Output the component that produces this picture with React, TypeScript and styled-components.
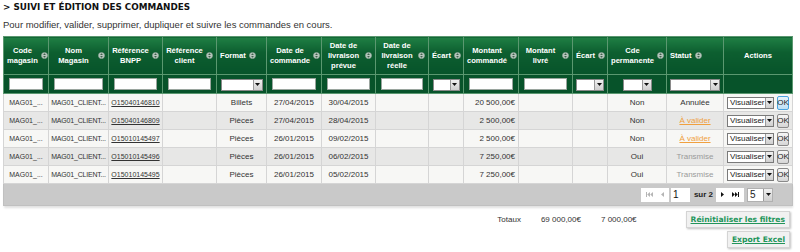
import React from "react";
import styled, { createGlobalStyle } from "styled-components";

const GlobalStyle = createGlobalStyle`
  html, body { margin: 0; padding: 0; background: #fff; }
  body { font-family: "Liberation Sans", Arial, sans-serif; }
`;

const Page = styled.div`
  width: 800px;
  height: 252px;
  padding: 2px 3px 0;
  box-sizing: border-box;
  overflow: hidden;
`;

const Title = styled.h1`
  margin: 0;
  font-family: "DejaVu Sans", Verdana, sans-serif;
  font-size: 8.8px;
  font-weight: bold;
  line-height: 10px;
  color: #111;
`;

const Intro = styled.p`
  margin: 7px 0 0;
  font-family: "Liberation Sans", Arial, sans-serif;
  font-size: 9.5px;
  line-height: 12px;
  color: #333;
`;

const Table = styled.table`
  margin-top: 5px;
  width: 789px;
  border-collapse: collapse;
  table-layout: fixed;
`;

const HeadCell = styled.th<{ $center?: boolean }>`
  height: 37px;
  padding: 0 3px;
  background: linear-gradient(#1f7f44 0%, #0d5f30 40%, #07532a 100%);
  border: 1px solid #5b9870;
  color: #fff;
  font-size: 7.6px;
  font-weight: bold;
  line-height: 10px;
  vertical-align: middle;
  text-align: ${(p) => (p.$center ? "center" : "left")};
`;

const HeadInner = styled.div`
  display: flex;
  align-items: center;
  gap: 3px;
`;

const HeadLabel = styled.span`
  flex: 0 1 auto;
  text-align: center;
`;

const FilterCell = styled.td`
  height: 14px;
  padding: 0;
  background: #07532a;
  border: 1px solid #5b9870;
  text-align: center;
  vertical-align: middle;
`;

const FilterInput = styled.div`
  width: calc(100% - 10px);
  height: 12px;
  margin: 0 auto;
  box-sizing: border-box;
  background: #fff;
  border: 1px solid #9aa59e;
`;

const FakeSelect = styled.div<{ $w: number }>`
  display: inline-flex;
  align-items: center;
  justify-content: space-between;
  width: ${(p) => p.$w}px;
  height: 12px;
  box-sizing: border-box;
  background: #fff;
  border: 1px solid #8a8a8a;
  vertical-align: middle;
  font-size: 8px;
  color: #222;
  padding-left: 2px;
`;

const ArrowBox = styled.span`
  display: flex;
  align-items: center;
  justify-content: center;
  width: 9px;
  height: 100%;
  box-sizing: border-box;
  background: linear-gradient(#f0f0f0, #cfcfcf);
  border-left: 1px solid #9a9a9a;
`;

const Row = styled.tr<{ $alt?: boolean }>`
  background: ${(p) => (p.$alt ? "#e7e7e6" : "#f7f7f5")};
`;

const Cell = styled.td<{ $align?: "left" | "center" | "right"; $small?: boolean; $tight?: boolean }>`
  height: 17px;
  padding: 0 ${(p) => (p.$small ? 1 : 3)}px;
  border: 1px solid #d5d5d5;
  font-size: ${(p) => (p.$small ? 7 : 8)}px;
  letter-spacing: ${(p) => (p.$tight ? "-0.2px" : "normal")};
  color: #333;
  white-space: nowrap;
  overflow: hidden;
  text-align: ${(p) => p.$align ?? "center"};
  vertical-align: middle;
`;

const RefLink = styled.a`
  color: #333;
  text-decoration: underline;
`;

const StatusText = styled.span<{ $kind: "cancel" | "validate" | "sent" }>`
  color: ${(p) => (p.$kind === "validate" ? "#f0a040" : p.$kind === "sent" ? "#9a9a9a" : "#333")};
  text-decoration: ${(p) => (p.$kind === "validate" ? "underline" : "none")};
`;

const Actions = styled.div`
  display: flex;
  align-items: center;
  gap: 3px;
`;

const ActionSelect = styled(FakeSelect)`
  height: 12px;
  border-color: #7a7a7a;
`;

const OkButton = styled.span<{ $focus?: boolean }>`
  display: inline-flex;
  align-items: center;
  justify-content: center;
  width: 12px;
  height: 14px;
  box-sizing: border-box;
  border: 1px solid ${(p) => (p.$focus ? "#4aa3df" : "#8a8a8a")};
  border-radius: 2px;
  background: ${(p) => (p.$focus ? "linear-gradient(#e8f4fc, #bfe0f5)" : "linear-gradient(#f6f6f6, #d6d6d6)")};
  font-size: 8px;
  color: #222;
`;

const FootCell = styled.td`
  height: 21px;
  padding: 0 19px 0 0;
  background: #c9c9c9;
  border: 1px solid #c0c0c0;
  box-shadow: 0 2px 2px rgba(0, 0, 0, 0.12);
`;

const Pager = styled.div`
  display: flex;
  justify-content: flex-end;
  align-items: center;
  gap: 2px;
`;

const NavBox = styled.span`
  display: inline-flex;
  align-items: center;
  gap: 8px;
  height: 14px;
  padding: 0 5px;
  background: #fff;
`;

const PageInput = styled.span`
  display: inline-flex;
  align-items: center;
  width: 19px;
  height: 14px;
  padding-left: 2px;
  box-sizing: border-box;
  background: #fff;
  font-size: 10px;
  color: #111;
`;

const PageOf = styled.span`
  font-size: 8px;
  font-weight: bold;
  color: #222;
  margin: 0 1px 0 2px;
`;

const SizeSelect = styled(FakeSelect)`
  height: 14px;
  font-size: 10px;
  margin-left: 1px;
  border-color: #b0b0b0;
`;

const Bottom = styled.div`
  display: flex;
  align-items: flex-start;
  margin-top: 5px;
  width: 787px;
`;

const Totals = styled.div`
  flex: 1;
  display: flex;
  justify-content: flex-end;
  align-items: center;
  gap: 20px;
  height: 17px;
  padding-right: 49px;
  font-size: 8px;
  color: #333;
`;

const Buttons = styled.div`
  display: flex;
  flex-direction: column;
  align-items: flex-end;
  gap: 3px;
`;

const GreenButton = styled.a`
  display: inline-flex;
  align-items: center;
  height: 17px;
  padding: 0 4px;
  box-sizing: border-box;
  background: #f1f1f1;
  border: 1px solid #d4d4d4;
  box-shadow: 1px 1px 2px rgba(0, 0, 0, 0.25);
  font-family: "DejaVu Sans", Verdana, sans-serif;
  font-size: 7.6px;
  font-weight: bold;
  color: #22955a;
  text-decoration: underline;
`;

const SortIcon = () => (
  <svg width="7" height="7" viewBox="0 0 7 7" style={{ flex: "none" }}>
    <circle cx="3.5" cy="3.5" r="3.1" fill="#b7c6bd" stroke="#8fa598" strokeWidth="0.5" />
    <path d="M3.5 1.3 L4.9 3 H2.1Z M3.5 5.7 L4.9 4 H2.1Z" fill="#3e604b" />
  </svg>
);

const DownArrow = () => (
  <svg width="5" height="3" viewBox="0 0 5 3">
    <path d="M0 0 H5 L2.5 3Z" fill="#111" />
  </svg>
);

const NavIcon = ({ kind, dim }: { kind: "first" | "prev" | "next" | "last"; dim?: boolean }) => {
  const c = dim ? "#b5b5b5" : "#111";
  const paths: Record<string, string> = {
    first: "M0 0 H1 V5 H0Z M4 0 V5 L1.2 2.5Z M7 0 V5 L4.2 2.5Z",
    prev: "M3 0 V5 L0 2.5Z",
    next: "M0 0 V5 L3 2.5Z",
    last: "M0 0 V5 L2.8 2.5Z M3 0 V5 L5.8 2.5Z M6 0 H7 V5 H6Z",
  };
  const w = kind === "prev" || kind === "next" ? 3 : 7;
  return (
    <svg width={w} height="5" viewBox={`0 0 ${w} 5`}>
      <path d={paths[kind]} fill={c} />
    </svg>
  );
};

const widths = [45, 60, 54, 54, 50, 55, 54, 53, 35, 55, 54, 35, 59, 57, 69];

type Col = { label: string; sort: boolean; filter: "input" | "select" | "none"; selW?: number };
const columns: Col[] = [
  { label: "Code magasin", sort: true, filter: "input" },
  { label: "Nom Magasin", sort: true, filter: "input" },
  { label: "Référence BNPP", sort: true, filter: "input" },
  { label: "Référence client", sort: true, filter: "input" },
  { label: "Format", sort: true, filter: "select", selW: 42 },
  { label: "Date de commande", sort: true, filter: "input" },
  { label: "Date de livraison prévue", sort: true, filter: "input" },
  { label: "Date de livraison réelle", sort: true, filter: "input" },
  { label: "Écart", sort: true, filter: "select", selW: 27 },
  { label: "Montant commandé", sort: true, filter: "input" },
  { label: "Montant livré", sort: true, filter: "input" },
  { label: "Écart", sort: true, filter: "select", selW: 28 },
  { label: "Cde permanente", sort: true, filter: "select", selW: 29 },
  { label: "Statut", sort: true, filter: "select", selW: 50 },
  { label: "Actions", sort: false, filter: "none" },
];

type Order = {
  ref: string;
  format: string;
  date: string;
  delivery: string;
  amount: string;
  perm: string;
  status: string;
  kind: "cancel" | "validate" | "sent";
};

const orders: Order[] = [
  { ref: "O15040146810", format: "Billets", date: "27/04/2015", delivery: "30/04/2015", amount: "20 500,00€", perm: "Non", status: "Annulée", kind: "cancel" },
  { ref: "O15040146809", format: "Pièces", date: "27/04/2015", delivery: "28/04/2015", amount: "2 500,00€", perm: "Non", status: "À valider", kind: "validate" },
  { ref: "O15010145497", format: "Pièces", date: "26/01/2015", delivery: "09/02/2015", amount: "2 500,00€", perm: "Non", status: "À valider", kind: "validate" },
  { ref: "O15010145496", format: "Pièces", date: "26/01/2015", delivery: "06/02/2015", amount: "7 250,00€", perm: "Oui", status: "Transmise", kind: "sent" },
  { ref: "O15010145495", format: "Pièces", date: "26/01/2015", delivery: "05/02/2015", amount: "7 250,00€", perm: "Oui", status: "Transmise", kind: "sent" },
];

export default function App() {
  return (
    <Page>
      <GlobalStyle />
      <Title>&gt; SUIVI ET ÉDITION DES COMMANDES</Title>
      <Intro>Pour modifier, valider, supprimer, dupliquer et suivre les commandes en cours.</Intro>
      <Table>
        <colgroup>
          {widths.map((w, i) => (
            <col key={i} style={{ width: w }} />
          ))}
        </colgroup>
        <thead>
          <tr>
            {columns.map((c, i) =>
              c.sort ? (
                <HeadCell key={i}>
                  <HeadInner>
                    <HeadLabel>{c.label}</HeadLabel>
                    <SortIcon />
                  </HeadInner>
                </HeadCell>
              ) : (
                <HeadCell key={i} $center>
                  {c.label}
                </HeadCell>
              )
            )}
          </tr>
          <tr>
            {columns.map((c, i) => (
              <FilterCell key={i}>
                {c.filter === "input" && <FilterInput />}
                {c.filter === "select" && (
                  <FakeSelect $w={c.selW ?? 30}>
                    <span />
                    <ArrowBox>
                      <DownArrow />
                    </ArrowBox>
                  </FakeSelect>
                )}
              </FilterCell>
            ))}
          </tr>
        </thead>
        <tbody>
          {orders.map((o, i) => (
            <Row key={o.ref} $alt={i % 2 === 1}>
              <Cell $small>MAG01_...</Cell>
              <Cell $small $tight>MAG01_CLIENT...</Cell>
              <Cell $small>
                <RefLink>{o.ref}</RefLink>
              </Cell>
              <Cell />
              <Cell>{o.format}</Cell>
              <Cell>{o.date}</Cell>
              <Cell>{o.delivery}</Cell>
              <Cell />
              <Cell />
              <Cell $align="right">{o.amount}</Cell>
              <Cell />
              <Cell />
              <Cell>{o.perm}</Cell>
              <Cell>
                <StatusText $kind={o.kind}>{o.status}</StatusText>
              </Cell>
              <Cell $align="left">
                <Actions>
                  <ActionSelect $w={47}>
                    Visualiser
                    <ArrowBox>
                      <DownArrow />
                    </ArrowBox>
                  </ActionSelect>
                  <OkButton $focus={i === 0}>OK</OkButton>
                </Actions>
              </Cell>
            </Row>
          ))}
        </tbody>
        <tfoot>
          <tr>
            <FootCell colSpan={15}>
              <Pager>
                <NavBox>
                  <NavIcon kind="first" dim />
                  <NavIcon kind="prev" dim />
                </NavBox>
                <PageInput>1</PageInput>
                <PageOf>sur 2</PageOf>
                <NavBox>
                  <NavIcon kind="next" />
                  <NavIcon kind="last" />
                </NavBox>
                <SizeSelect $w={26}>
                  5
                  <ArrowBox>
                    <DownArrow />
                  </ArrowBox>
                </SizeSelect>
              </Pager>
            </FootCell>
          </tr>
        </tfoot>
      </Table>
      <Bottom>
        <Totals>
          <span>Totaux</span>
          <span>69 000,00€</span>
          <span>7 000,00€</span>
        </Totals>
        <Buttons>
          <GreenButton>Réinitialiser les filtres</GreenButton>
          <GreenButton>Export Excel</GreenButton>
        </Buttons>
      </Bottom>
    </Page>
  );
}
